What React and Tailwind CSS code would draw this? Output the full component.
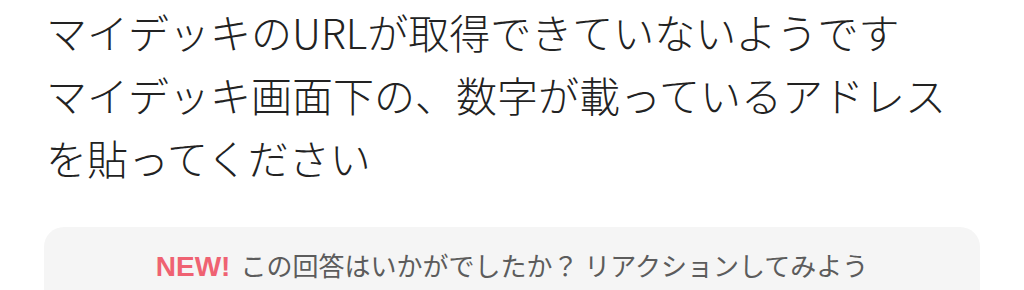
export default function App() {
  return (
    <div
      className="w-[1024px] h-[290px] overflow-hidden bg-white px-[44px]"
      style={{ fontFamily: '"Noto Sans CJK JP", "Noto Sans", sans-serif' }}
    >
      <div className="pl-[2px] text-[41px] font-light leading-[63px] text-[#222222]">
        <p>マイデッキのURLが取得できていないようです</p>
        <p>マイデッキ画面下の、数字が載っているアドレス</p>
        <p>を貼ってください</p>
      </div>

      <div className="mt-[38px] rounded-[20px] bg-[#f5f5f5] pt-[20px] pb-[24px] text-center">
        <p className="text-[26px] leading-[36px] text-[#5c5c5c]">
          <span
            className="mr-[10px] text-[28px] font-bold text-[#ef6272]"
            style={{ fontFamily: '"Liberation Sans", "Noto Sans", sans-serif' }}
          >
            NEW!
          </span>
          この回答はいかがでしたか？ リアクションしてみよう
        </p>
      </div>
    </div>
  );
}
